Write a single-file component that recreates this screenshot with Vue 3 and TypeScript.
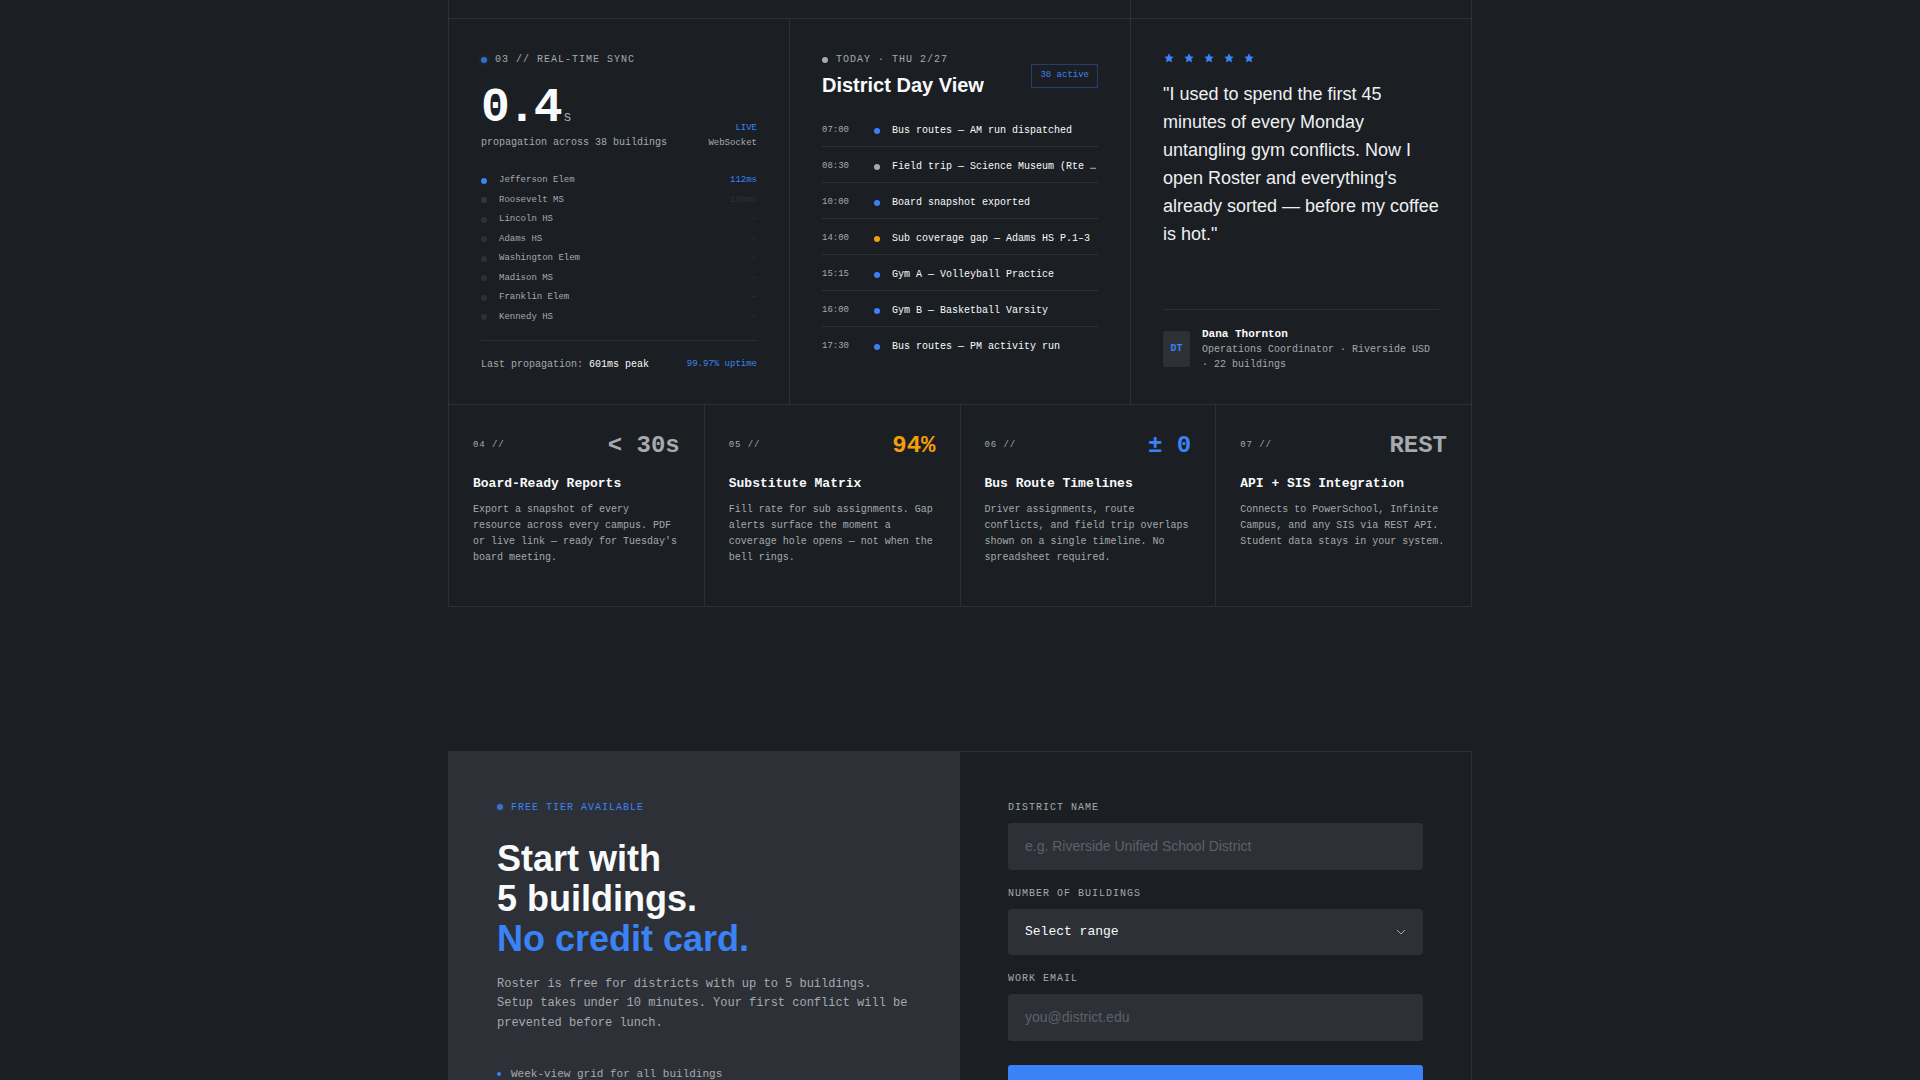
<script setup lang="ts">
import { ref } from 'vue'

type Tone = 'blue' | 'gray' | 'amber'

interface SyncNode { name: string; latency: string; state: 'done' | 'next' | 'idle' }
interface DayEvent { time: string; tone: Tone; title: string }
interface Feature { id: string; metric: string; tone: Tone; title: string; text: string }

const nodes: SyncNode[] = [
  { name: 'Jefferson Elem', latency: '112ms', state: 'done' },
  { name: 'Roosevelt MS', latency: '180ms', state: 'next' },
  { name: 'Lincoln HS', latency: '–', state: 'idle' },
  { name: 'Adams HS', latency: '–', state: 'idle' },
  { name: 'Washington Elem', latency: '–', state: 'idle' },
  { name: 'Madison MS', latency: '–', state: 'idle' },
  { name: 'Franklin Elem', latency: '–', state: 'idle' },
  { name: 'Kennedy HS', latency: '–', state: 'idle' },
]

const events: DayEvent[] = [
  { time: '07:00', tone: 'blue', title: 'Bus routes — AM run dispatched' },
  { time: '08:30', tone: 'gray', title: 'Field trip — Science Museum (Rte …' },
  { time: '10:00', tone: 'blue', title: 'Board snapshot exported' },
  { time: '14:00', tone: 'amber', title: 'Sub coverage gap — Adams HS P.1–3' },
  { time: '15:15', tone: 'blue', title: 'Gym A — Volleyball Practice' },
  { time: '16:00', tone: 'blue', title: 'Gym B — Basketball Varsity' },
  { time: '17:30', tone: 'blue', title: 'Bus routes — PM activity run' },
]

const features: Feature[] = [
  { id: '04', metric: '< 30s', tone: 'gray', title: 'Board-Ready Reports', text: "Export a snapshot of every resource across every campus. PDF or live link — ready for Tuesday's board meeting." },
  { id: '05', metric: '94%', tone: 'amber', title: 'Substitute Matrix', text: 'Fill rate for sub assignments. Gap alerts surface the moment a coverage hole opens — not when the bell rings.' },
  { id: '06', metric: '± 0', tone: 'blue', title: 'Bus Route Timelines', text: 'Driver assignments, route conflicts, and field trip overlaps shown on a single timeline. No spreadsheet required.' },
  { id: '07', metric: 'REST', tone: 'gray', title: 'API + SIS Integration', text: 'Connects to PowerSchool, Infinite Campus, and any SIS via REST API. Student data stays in your system.' },
]

const district = ref('')
const range = ref('')
const email = ref('')
</script>

<template>
  <main class="page">
    <section class="bento">
      <div class="card span-8 stub"></div>
      <div class="card span-4 stub"></div>

      <article class="card span-4 sync">
        <p class="label"><span class="dot blue live"></span>03 // REAL-TIME SYNC</p>
        <div class="sync-head">
          <div>
            <p class="figure">0.4<span class="unit">s</span></p>
            <p class="note">propagation across 38 buildings</p>
          </div>
          <div class="link-state">
            <p class="accent">LIVE</p>
            <p>WebSocket</p>
          </div>
        </div>
        <ul class="nodes">
          <li v-for="n in nodes" :key="n.name" :class="n.state">
            <span class="dot"></span>
            <span class="node-name">{{ n.name }}</span>
            <span class="latency">{{ n.latency }}</span>
          </li>
        </ul>
        <footer class="sync-foot">
          <p>Last propagation: <span class="bright">601ms peak</span></p>
          <p class="accent uptime">99.97% uptime</p>
        </footer>
      </article>

      <article class="card span-4">
        <header class="day-head">
          <div>
            <p class="label"><span class="dot gray"></span>TODAY · THU 2/27</p>
            <h2>District Day View</h2>
          </div>
          <span class="badge">38 active</span>
        </header>
        <ul class="events">
          <li v-for="e in events" :key="e.time">
            <time>{{ e.time }}</time>
            <span class="dot" :class="e.tone"></span>
            <span class="event-title">{{ e.title }}</span>
          </li>
        </ul>
      </article>

      <article class="card span-4 quote">
        <div class="stars">
          <svg v-for="i in 5" :key="i" viewBox="0 0 12 12" aria-hidden="true">
            <path d="M6 1.2 7.5 4.4 10.7 4.7 8.4 7.1 8.9 10.4 6 8.8 3.1 10.4 3.6 7.1 1.3 4.7 4.5 4.4Z" />
          </svg>
        </div>
        <blockquote>"I used to spend the first 45 minutes of every Monday untangling gym conflicts. Now I open Roster and everything's already sorted — before my coffee is hot."</blockquote>
        <footer class="author">
          <span class="avatar">DT</span>
          <div>
            <p class="author-name">Dana Thornton</p>
            <p class="note">Operations Coordinator · Riverside USD · 22 buildings</p>
          </div>
        </footer>
      </article>

      <article v-for="f in features" :key="f.id" class="card span-3 feature">
        <header>
          <span class="index">{{ f.id }} //</span>
          <span class="metric" :class="f.tone">{{ f.metric }}</span>
        </header>
        <h3>{{ f.title }}</h3>
        <p>{{ f.text }}</p>
      </article>
    </section>

    <section class="signup">
      <div class="pitch">
        <p class="label accent"><span class="dot blue live"></span>FREE TIER AVAILABLE</p>
        <h1>Start with<br />5 buildings.<br /><span class="accent">No credit card.</span></h1>
        <p class="lead">Roster is free for districts with up to 5 buildings. Setup takes under 10 minutes. Your first conflict will be prevented before lunch.</p>
        <ul class="perks">
          <li>Week-view grid for all buildings</li>
        </ul>
      </div>
      <form class="form" @submit.prevent>
        <div class="field">
          <label for="district">DISTRICT NAME</label>
          <input id="district" v-model="district" type="text" placeholder="e.g. Riverside Unified School District" />
        </div>
        <div class="field">
          <label for="range">NUMBER OF BUILDINGS</label>
          <div class="select-box">
            <select id="range" v-model="range">
              <option value="">Select range</option>
            </select>
            <svg viewBox="0 0 12 12" aria-hidden="true"><path d="M2 4 6 8 10 4" /></svg>
          </div>
        </div>
        <div class="field">
          <label for="email">WORK EMAIL</label>
          <input id="email" v-model="email" type="email" placeholder="you@district.edu" />
        </div>
        <button type="submit" aria-label="Get started"></button>
      </form>
    </section>
  </main>
</template>

<style>
body {
  margin: 0;
  background: #1b1f23;
}
</style>

<style scoped>
.page {
  --bg: #1b1f23;
  --line: #2d3137;
  --muted: #a6a9ae;
  --text: #f8fafc;
  --blue: #3b82f6;
  --amber: #f59e0b;
  --mono: "Liberation Mono", "Courier New", monospace;
  --sans: "Liberation Sans", Arial, sans-serif;
  box-sizing: border-box;
  height: 100vh;
  overflow: hidden;
  background: var(--bg);
  color: var(--muted);
  font: 10px/1.5 var(--mono);
}
.page *,
.page *::before {
  box-sizing: border-box;
}
p, h1, h2, h3, ul, blockquote {
  margin: 0;
  padding: 0;
}
ul {
  list-style: none;
}
.accent { color: var(--blue); }
.bright { color: var(--text); }

.bento,
.signup {
  max-width: 1024px;
  margin: 0 auto;
  border: 1px solid var(--line);
}
.bento {
  display: grid;
  grid-template-columns: repeat(12, minmax(0, 1fr));
  gap: 1px;
  border-top: 0;
  background: var(--line);
}
.card {
  padding: 33px 32px 32px;
  background: var(--bg);
}
.span-8 { grid-column: span 8; }
.span-4 { grid-column: span 4; }
.span-3 { grid-column: span 3; }
.stub {
  height: 18px;
  padding: 0;
}

.label {
  display: flex;
  align-items: center;
  gap: 8px;
  letter-spacing: 1px;
}
.dot {
  flex: none;
  width: 6px;
  height: 6px;
  border-radius: 50%;
  background: var(--line);
}
.dot.blue { background: var(--blue); }
.dot.gray { background: var(--muted); }
.dot.amber { background: var(--amber); }
.dot.live {
  opacity: 0.8;
  box-shadow: 0 0 4px rgba(59, 130, 246, 0.4);
}

.sync {
  display: flex;
  flex-direction: column;
}
.sync-head {
  display: flex;
  align-items: flex-end;
  justify-content: space-between;
  margin: 17px 0 24px;
}
.figure {
  margin-bottom: 3px;
  color: var(--text);
  font-size: 48px;
  font-weight: 700;
  line-height: 1;
  letter-spacing: -0.05em;
}
.unit {
  margin-left: 3px;
  color: var(--muted);
  font-size: 14px;
  font-weight: 400;
}
.link-state {
  font-size: 9px;
  text-align: right;
}
.link-state .accent { margin-bottom: 1px; }
.nodes {
  display: flex;
  flex-direction: column;
  gap: 6px;
  font-size: 9px;
}
.nodes li {
  display: flex;
  align-items: center;
  gap: 12px;
}
.node-name { flex: 1; }
.latency { color: var(--line); }
.done .dot { background: var(--blue); }
.done .latency { color: var(--blue); }
.next .dot { background: #2f3745; }
.sync-foot {
  display: flex;
  align-items: center;
  justify-content: space-between;
  margin-top: 16px;
  padding-top: 16px;
  border-top: 1px solid var(--line);
}
.uptime { font-size: 9px; }

.day-head {
  display: flex;
  align-items: center;
  justify-content: space-between;
  margin-bottom: 11px;
}
h2 {
  margin-top: 3px;
  color: var(--text);
  font: 700 20px/1.5 var(--sans);
}
.badge {
  padding: 4px 8px;
  border: 1px solid #253e70;
  color: var(--blue);
  font-size: 9px;
}
.events li {
  display: flex;
  align-items: center;
  gap: 12px;
  padding: 12px 0 8px;
  border-bottom: 1px solid var(--line);
}
.events li:last-child { border-bottom: 0; }
time {
  flex: none;
  width: 40px;
  font-size: 9px;
}
.event-title {
  flex: 1;
  min-width: 0;
  overflow: hidden;
  color: var(--text);
  text-overflow: ellipsis;
  white-space: nowrap;
}

.quote {
  display: flex;
  flex-direction: column;
}
.stars {
  display: flex;
  gap: 8px;
  margin-bottom: 16px;
}
.stars svg {
  width: 12px;
  height: 12px;
  fill: var(--blue);
}
blockquote {
  color: #eef0f2;
  font: 18px/28px var(--sans);
}
.author {
  display: flex;
  align-items: center;
  gap: 12px;
  margin-top: auto;
  padding-top: 16px;
  border-top: 1px solid var(--line);
}
.avatar {
  display: flex;
  flex: none;
  align-items: center;
  justify-content: center;
  width: 27px;
  height: 36px;
  border-radius: 2px;
  background: var(--line);
  color: var(--blue);
  font-weight: 700;
}
.author-name {
  color: var(--text);
  font-size: 11px;
  font-weight: 700;
}

.feature { padding: 24px 24px 40px; }
.feature header {
  display: flex;
  align-items: center;
  justify-content: space-between;
  margin-bottom: 11px;
}
.index {
  font-size: 9px;
  letter-spacing: 0.1em;
}
.metric {
  font-size: 24px;
  font-weight: 700;
  line-height: 34px;
}
.metric.blue { color: var(--blue); }
.metric.amber { color: var(--amber); }
h3 {
  margin-bottom: 8px;
  color: var(--text);
  font-size: 13px;
  font-weight: 700;
}
.feature p { line-height: 16px; }

.signup {
  display: grid;
  grid-template-columns: 1fr 1fr;
  margin-top: 144px;
}
.pitch,
.form {
  padding: 48px;
}
.pitch { background: var(--line); }
h1 {
  margin: 24px 0 16px;
  color: var(--text);
  font: 700 36px/40px var(--sans);
}
.lead {
  margin-bottom: 32px;
  font-size: 12px;
  line-height: 1.65;
}
.perks li {
  display: flex;
  align-items: center;
  gap: 10px;
  font-size: 11px;
}
.perks li::before {
  width: 4px;
  height: 4px;
  border-radius: 50%;
  background: var(--blue);
  content: "";
}

.form {
  display: flex;
  flex-direction: column;
  gap: 16px;
}
.field {
  display: flex;
  flex-direction: column;
  gap: 8px;
}
.field label { letter-spacing: 1px; }
input,
select {
  width: 100%;
  margin: 0;
  padding: 0 16px;
  border: 1px solid var(--line);
  border-radius: 3px;
  outline: 0;
  background: var(--line);
  color: var(--text);
}
input {
  height: 47px;
  font: 14px var(--sans);
}
input::placeholder { color: #5c6068; }
.select-box { position: relative; }
select {
  display: block;
  height: 46px;
  appearance: none;
  font: 13px var(--mono);
}
.select-box svg {
  position: absolute;
  top: 17px;
  right: 16px;
  width: 12px;
  height: 12px;
  fill: none;
  stroke: var(--muted);
  pointer-events: none;
}
button {
  height: 48px;
  margin-top: 8px;
  border: 0;
  border-radius: 3px;
  background: var(--blue);
}
</style>
